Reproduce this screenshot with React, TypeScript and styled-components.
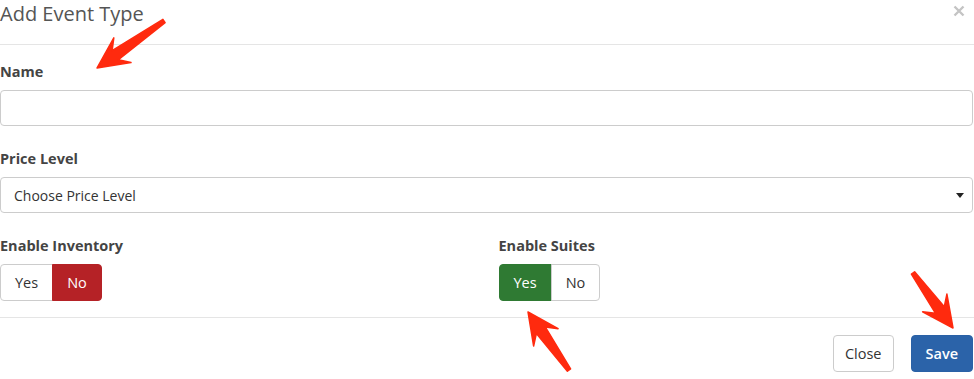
import styled, { createGlobalStyle } from "styled-components";

const GlobalStyle = createGlobalStyle`
  body {
    margin: 0;
    background: #ffffff;
    font-family: "Open Sans", "Liberation Sans", sans-serif;
    color: #333333;
  }
`;

const Modal = styled.div`
  position: relative;
  width: 974px;
  height: 379px;
  overflow: hidden;
  background: #ffffff;
`;

const Header = styled.div`
  box-sizing: border-box;
  height: 45px;
  display: flex;
  align-items: flex-start;
  justify-content: space-between;
  border-bottom: 1px solid #e5e5e5;
`;

const Title = styled.h4`
  margin: 0;
  font-size: 20px;
  line-height: 27px;
  font-weight: 400;
  color: #555555;
`;

const CloseX = styled.button`
  border: none;
  background: transparent;
  padding: 0;
  margin: 4px 7px 0 0;
  width: 14px;
  height: 14px;
  display: flex;
  align-items: center;
  cursor: pointer;
`;

const Body = styled.div`
  padding: 17px 1px 16px 0;
`;

const Group = styled.div`
  margin-bottom: 23px;
`;

const Label = styled.label`
  display: block;
  font-size: 14.5px;
  line-height: 20px;
  font-weight: 700;
  color: #444444;
  margin-bottom: 8px;
`;

const TextInput = styled.input`
  box-sizing: border-box;
  display: block;
  width: 100%;
  height: 36px;
  border: 1px solid #cccccc;
  border-radius: 4px;
  padding: 6px 12px;
  font: inherit;
  font-size: 14px;
  outline: none;
`;

const SelectBox = styled.div`
  box-sizing: border-box;
  height: 36px;
  border: 1px solid #cccccc;
  border-radius: 4px;
  padding: 0 8px 0 13px;
  display: flex;
  align-items: center;
  justify-content: space-between;
  font-size: 14px;
  color: #333333;
`;

const Caret = styled.span`
  width: 0;
  height: 0;
  border-left: 4px solid transparent;
  border-right: 4px solid transparent;
  border-top: 5px solid #222222;
`;

const Columns = styled.div`
  display: grid;
  grid-template-columns: 1fr 1fr;
  column-gap: 24px;
`;

const Toggle = styled.div`
  display: inline-flex;
`;

const ToggleButton = styled.button<{ $active?: string }>`
  box-sizing: border-box;
  height: 37px;
  padding: 0 14px;
  font: inherit;
  font-size: 14.5px;
  border: 1px solid ${(p) => (p.$active ? p.$active : "#cccccc")};
  background: ${(p) => (p.$active ? p.$active : "#ffffff")};
  color: ${(p) => (p.$active ? "#ffffff" : "#333333")};
  &:first-child {
    border-radius: 4px 0 0 4px;
  }
  &:last-child {
    border-radius: 0 4px 4px 0;
    margin-left: -1px;
  }
`;

const Footer = styled.div`
  border-top: 1px solid #e5e5e5;
  padding: 17px 1px 0 0;
  display: flex;
  justify-content: flex-end;
  gap: 17px;
`;

const FooterButton = styled.button<{ $primary?: boolean }>`
  box-sizing: border-box;
  height: 37px;
  padding: 0 ${(p) => (p.$primary ? 14 : 11)}px;
  border-radius: 4px;
  font: inherit;
  font-size: 14.5px;
  font-weight: ${(p) => (p.$primary ? 600 : 400)};
  border: 1px solid ${(p) => (p.$primary ? "#2a61a6" : "#cccccc")};
  background: ${(p) => (p.$primary ? "#2b63a9" : "#ffffff")};
  color: ${(p) => (p.$primary ? "#ffffff" : "#333333")};
`;

const Overlay = styled.svg`
  position: absolute;
  left: 0;
  top: 0;
  pointer-events: none;
`;

type Pt = [number, number];

function arrowPoints(tip: Pt, tail: Pt, headLen: number, headHalf: number, neckHalf: number, tailHalf: number) {
  const dx = tip[0] - tail[0];
  const dy = tip[1] - tail[1];
  const len = Math.hypot(dx, dy);
  const ux = dx / len;
  const uy = dy / len;
  const nx = -uy;
  const ny = ux;
  const bx = tip[0] - ux * headLen;
  const by = tip[1] - uy * headLen;
  const nbx = tip[0] - ux * headLen * 0.72;
  const nby = tip[1] - uy * headLen * 0.72;
  const pts: Pt[] = [
    tip,
    [bx + nx * headHalf, by + ny * headHalf],
    [nbx + nx * neckHalf, nby + ny * neckHalf],
    [tail[0] + nx * tailHalf, tail[1] + ny * tailHalf],
    [tail[0] - nx * tailHalf, tail[1] - ny * tailHalf],
    [nbx - nx * neckHalf, nby - ny * neckHalf],
    [bx - nx * headHalf, by - ny * headHalf],
  ];
  return pts.map((p) => `${p[0].toFixed(1)},${p[1].toFixed(1)}`).join(" ");
}

const arrows: { tip: Pt; tail: Pt }[] = [
  { tip: [97, 68], tail: [164, 21] },
  { tip: [528, 312], tail: [569, 370] },
  { tip: [953, 328], tail: [913, 273] },
];

export default function App() {
  return (
    <Modal>
      <GlobalStyle />
      <Header>
        <Title>Add Event Type</Title>
        <CloseX aria-label="close">
          <svg width="12" height="12" viewBox="0 0 12 12">
            <path d="M1.5 1.5 L10.5 10.5 M10.5 1.5 L1.5 10.5" stroke="#c4c4c4" strokeWidth="2.4" />
          </svg>
        </CloseX>
      </Header>
      <Body>
        <Group>
          <Label>Name</Label>
          <TextInput type="text" />
        </Group>
        <Group>
          <Label>Price Level</Label>
          <SelectBox>
            <span>Choose Price Level</span>
            <Caret />
          </SelectBox>
        </Group>
        <Columns>
          <div>
            <Label>Enable Inventory</Label>
            <Toggle>
              <ToggleButton>Yes</ToggleButton>
              <ToggleButton $active="#b52226">No</ToggleButton>
            </Toggle>
          </div>
          <div>
            <Label>Enable Suites</Label>
            <Toggle>
              <ToggleButton $active="#2f7a33">Yes</ToggleButton>
              <ToggleButton>No</ToggleButton>
            </Toggle>
          </div>
        </Columns>
      </Body>
      <Footer>
        <FooterButton>Close</FooterButton>
        <FooterButton $primary>Save</FooterButton>
      </Footer>
      <Overlay width="974" height="379" viewBox="0 0 974 379">
        {arrows.map((a, i) => (
          <polygon
            key={i}
            points={arrowPoints(a.tip, a.tail, 31, 15, 5.5, 2)}
            fill="#ff2a0e"
            strokeLinejoin="round"
            stroke="#ff2a0e"
            strokeWidth="1.5"
          />
        ))}
      </Overlay>
    </Modal>
  );
}
